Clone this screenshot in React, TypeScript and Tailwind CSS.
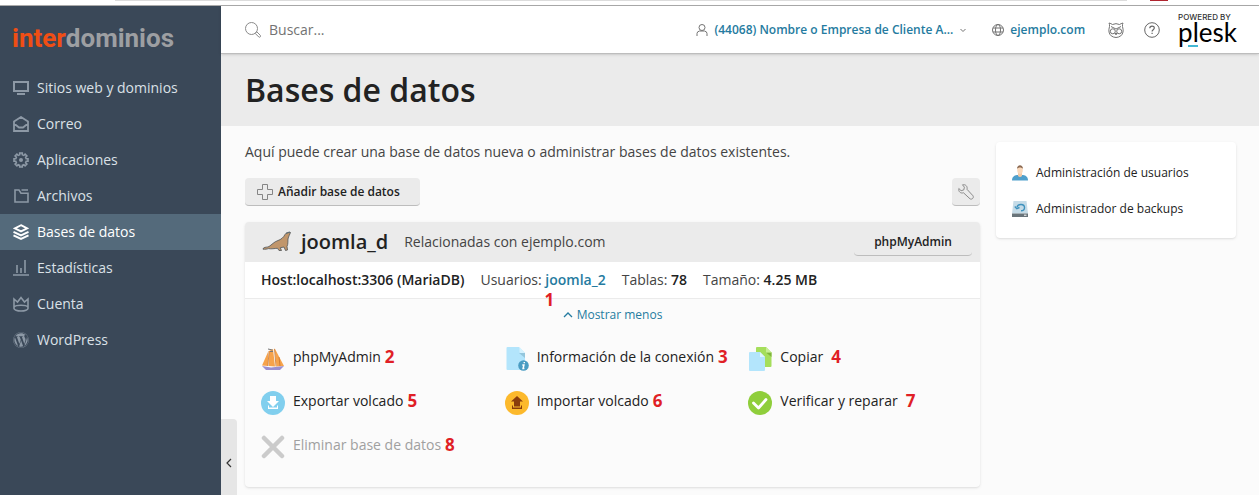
import React from 'react';
import { FaWordpress } from 'react-icons/fa';

const navItems = [
  { label: 'Sitios web y dominios', icon: <SitesIcon /> },
  { label: 'Correo', icon: <MailIcon /> },
  { label: 'Aplicaciones', icon: <GearIcon /> },
  { label: 'Archivos', icon: <FolderIcon /> },
  { label: 'Bases de datos', icon: <LayersIcon />, active: true },
  { label: 'Estadísticas', icon: <StatsIcon /> },
  { label: 'Cuenta', icon: <CrownIcon /> },
  { label: 'WordPress', icon: <FaWordpress className="w-4 h-4" /> },
];

const actions = [
  { label: 'phpMyAdmin', icon: <SailboatIcon />, step: 2, gap: 'gap-1' },
  { label: 'Información de la conexión', icon: <InfoFileIcon />, step: 3, gap: 'gap-1' },
  { label: 'Copiar', icon: <CopyIcon />, step: 4, gap: 'gap-2' },
  { label: 'Exportar volcado', icon: <ExportIcon />, step: 5, gap: 'gap-1' },
  { label: 'Importar volcado', icon: <ImportIcon />, step: 6, gap: 'gap-1' },
  { label: 'Verificar y reparar', icon: <CheckIcon />, step: 7, gap: 'gap-2' },
  { label: 'Eliminar base de datos', icon: <RemoveIcon />, step: 8, gap: 'gap-1', disabled: true },
];

function SitesIcon() {
  return (
    <svg className="w-4 h-4" viewBox="0 0 16 16" fill="none" stroke="currentColor" strokeWidth="2">
      <path d="M1 2h14v9H1zM4 14h8" />
    </svg>
  );
}

function MailIcon() {
  return (
    <svg className="w-4 h-4" viewBox="0 0 16 16" fill="none" stroke="currentColor" strokeWidth="1.8">
      <path d="M1 5.500l7-4.500 7 4.500V15H1zM1 7.500l5 4h4l5-4" />
    </svg>
  );
}

function GearIcon() {
  return (
    <svg className="w-4 h-4" viewBox="0 0 16 16" fill="none" stroke="currentColor" strokeWidth="1.6">
      <path d="M6.700 1h2.600v1.800l1.500.6 1.300-1.200 1.800 1.800-1.300 1.300.6 1.400H15v2.600h-1.800l-.6 1.500 1.300 1.300-1.800 1.800-1.300-1.300-1.500.6V15H6.700v-1.800l-1.500-.6-1.300 1.300-1.800-1.800 1.300-1.300-.6-1.500H1V6.700h1.800l.6-1.400-1.300-1.300 1.800-1.800 1.300 1.200 1.500-.6z" />
      <circle cx="8" cy="8" r="2" fill="currentColor" stroke="none" />
    </svg>
  );
}

function FolderIcon() {
  return (
    <svg className="w-4 h-4" viewBox="0 0 16 16" fill="none" stroke="currentColor" strokeWidth="1.6">
      <path d="M2 2h4l2 3.200h7V14H2zM8.500 2H15" />
    </svg>
  );
}

function LayersIcon() {
  return (
    <svg className="w-4 h-4" viewBox="0 0 16 16" fill="none" stroke="currentColor" strokeWidth="1.900">
      <path d="M8 1.200L14.200 4.300 8 7.400 1.800 4.300zM.5 7.800L8 11.400l7.500-3.600M.5 11.300L8 14.900l7.500-3.600" />
    </svg>
  );
}

function StatsIcon() {
  return (
    <svg className="w-4 h-4" viewBox="0 0 16 16" fill="none" stroke="currentColor" strokeWidth="1.600">
      <path d="M0 15h16M4 13V5M8 13V8M12 13V0" />
    </svg>
  );
}

function CrownIcon() {
  return (
    <svg className="w-4 h-4" viewBox="0 0 16 16" fill="none" stroke="currentColor" strokeWidth="1.600">
      <path d="M1 3l3.500 3L8 1.500 11.500 6 15 3v9.500c0 1.200-3 2.500-7 2.500s-7-1.300-7-2.500zM1 11c2-2.300 12-2.300 14 0" />
    </svg>
  );
}

function SailboatIcon() {
  return (
    <svg className="w-6 h-6 shrink-0" viewBox="0 0 24 24">
      <path d="M7 5L1 18.500l6 .5zM8 4v15l6 .5L12 2zM13.500 1l2 18.500 7.500-.5z" fill="#f6a34c" />
      <path d="M8 4L7 19M13.500 2l1.500 17.500M18 10l1 9" stroke="#c9752d" strokeWidth=".8" />
      <path d="M7 2l4.500 1M9 4.500h3" stroke="#777" strokeWidth="1" />
      <path d="M1 19l9 1.500 13-1.500-4 4H5z" fill="#9a8fd0" />
    </svg>
  );
}

function InfoFileIcon() {
  return (
    <svg className="w-6 h-6 shrink-0" viewBox="0 0 24 24">
      <path d="M2.500 0H14l6 6v17H2.500q-1 0-1-1V1q0-1 1-1z" fill="#b3e5fc" />
      <path d="M14 6h6v5z" fill="#94c6dc" />
      <path d="M14.500 0v5q0 1 1 1H20z" fill="#d5f2fe" />
      <circle cx="18.500" cy="18.500" r="5.300" fill="#4a9cc2" />
      <path d="M19.300 15v1.300M17.300 18h1.600l-.8 3.500h1.300" stroke="#fff" strokeWidth="1.500" fill="none" />
    </svg>
  );
}

function CopyIcon() {
  return (
    <svg className="w-6 h-6 shrink-0" viewBox="0 0 24 24">
      <path d="M9 0h9l5.500 5.500V19q0 1-1 1H8V1q0-1 1-1z" fill="#a5de5b" />
      <path d="M18 5.500h5.500V10z" fill="#7fb43c" />
      <path d="M18 0v5.500h5.500z" fill="#c8ee95" />
      <path d="M2 5h10l5 5v13q0 1-1 1H2q-1 0-1-1V6q0-1 1-1z" fill="#b3e5fc" />
      <path d="M12 5v5h5z" fill="#def5fe" />
    </svg>
  );
}

function ExportIcon() {
  return (
    <svg className="w-6 h-6 shrink-0" viewBox="0 0 24 24">
      <circle cx="12" cy="12" r="12" fill="#81cfee" />
      <path d="M9 5h6v5h3l-6 6-6-6h3zM7 14.500V18h10v-3.500h-1v2H8v-2z" fill="#fff" />
    </svg>
  );
}

function ImportIcon() {
  return (
    <svg className="w-6 h-6 shrink-0" viewBox="0 0 24 24">
      <circle cx="12" cy="12" r="12" fill="#fcb92c" />
      <path d="M9 15.500h6v-5h3L12 5l-6 5.500h3zM7 14.500V18h10v-3.500h-1v2H8v-2z" fill="#8a3c0c" />
    </svg>
  );
}

function CheckIcon() {
  return (
    <svg className="w-6 h-6 shrink-0" viewBox="0 0 24 24" fill="none">
      <circle cx="12" cy="12" r="12" fill="#8fce3b" />
      <path d="M5.500 12l5 5 7.500-8.500" stroke="#fff" strokeWidth="2.800" strokeLinecap="round" strokeLinejoin="round" />
    </svg>
  );
}

function RemoveIcon() {
  return (
    <svg className="w-6 h-6 shrink-0" viewBox="0 0 24 24">
      <path d="M3 3l18 18M21 3L3 21" stroke="#cbcbcb" strokeWidth="4.500" strokeLinecap="round" />
    </svg>
  );
}

function SeaLionIcon() {
  return (
    <svg className="w-8 h-6 shrink-0" viewBox="0 0 32 24">
      <path
        d="M29.500 2.500c-2-.6-4.500.2-5.500 2-1.500 3-4 5-7 6-4 1.300-6.500 4.500-9 6-1.500.9-3.500.3-5.500 1.500l-.5 1.200c2.500.2 3.500 0 5.500-.6 3 .6 6-.2 9-.3l1.500 2.200h2.500l-1.200-2.800 3.700-.7 1.500 3.500 2-.5-.5-3.500c1.500-3 .5-6 1.200-8.500.5-1.800 1.500-3.300 2.300-5.500z"
        fill="#c1966b"
        stroke="#4f5457"
        strokeWidth=".8"
      />
      <path d="M25 3.500l4-1.500" stroke="#5d6f78" strokeWidth="1.300" />
    </svg>
  );
}

function UserColorIcon() {
  return (
    <svg className="w-4 h-4 shrink-0" viewBox="0 0 16 16">
      <path d="M0 15.500c0-3.500 2-5 5-5.500h6c3 .5 5 2 5 5.500z" fill="#4f9fcb" />
      <path d="M6 8h4v3q-2 2-4 0z" fill="#f1c8a6" />
      <ellipse cx="8" cy="5" rx="2.800" ry="4" fill="#fbd9bb" />
      <path d="M5 4c0-5 6-5 6 0-1-2-5-2-6 0z" fill="#8b6a52" />
    </svg>
  );
}

function BackupIcon() {
  return (
    <svg className="w-4 h-4 shrink-0" viewBox="0 0 16 16">
      <path d="M1.500 0h13L16 12.500H0z" fill="#c5dbe7" />
      <path d="M0 12.500h16V16H0z" fill="#69747a" />
      <path d="M12 14.200h2.500" stroke="#fff" strokeWidth="1" />
      <path d="M5 6C6 2.500 12.500 2.500 12.500 6.500c0 2.300-1.500 3.300-3.500 3.300M2.800 5.500l2 2.200L7.500 6.500" stroke="#3f92bd" strokeWidth="1.400" fill="none" />
    </svg>
  );
}

function Sidebar() {
  return (
    <aside className="w-[221px] shrink-0 bg-[#3a4858]">
      <a href="#" className="flex items-center h-16 pl-3 text-[26px] leading-8 font-bold font-['Roboto',sans-serif]">
        <span className="text-[#f04e14]">inter</span>
        <span className="text-[#9d9fa2]">dominios</span>
      </a>
      <nav>
        {navItems.map((item) => (
          <a
            key={item.label}
            href="#"
            className={
              item.active
                ? 'flex items-center gap-2 h-9 pl-[13px] bg-[#546a7b] text-white'
                : 'flex items-center gap-2 h-9 pl-[13px] text-[#8d99a6]'
            }
          >
            {item.icon}
            <span className={item.active ? 'text-white' : 'text-[#dbe1e7]'}>{item.label}</span>
          </a>
        ))}
      </nav>
    </aside>
  );
}

function TopBar() {
  return (
    <header className="flex items-center justify-between h-12 pl-6 pr-[22px] bg-white border-b border-[#bdbdbd] shadow-sm z-10">
      <label className="flex items-center gap-2">
        <svg className="w-4 h-4" viewBox="0 0 16 16" fill="none" stroke="#8a8a8a" strokeWidth="1">
          <circle cx="6.500" cy="6.500" r="6" />
          <path d="M10.800 10.800l1-1 3.500 3.500q.6.8 0 1.500-.8.800-1.500.2l-3.500-3.500z" />
        </svg>
        <input type="text" placeholder="Buscar..." aria-label="Buscar" className="w-60 outline-none placeholder:text-[#737373]" />
      </label>

      <div className="flex items-center text-[12px] font-semibold text-[#257ba0]">
        <button type="button" className="flex items-center gap-1.5">
          <svg className="w-3 h-3" viewBox="0 0 12 12" fill="none" stroke="#737373" strokeWidth="1">
            <circle cx="6" cy="3.500" r="3" />
            <path d="M1 12V9.500Q1 7.500 3.500 7h5q2.500.5 2.500 2.500V12" />
          </svg>
          <span>(44068) Nombre o Empresa de Cliente A...</span>
          <svg className="w-2 h-2" viewBox="0 0 8 8" fill="none" stroke="#737373">
            <path d="M1.500 3L4 5.500 6.500 3" />
          </svg>
        </button>
        <a href="#" className="flex items-center gap-1.5 ml-[25px]">
          <svg className="w-3 h-3" viewBox="0 0 12 12" fill="none" stroke="#737373" strokeWidth="1">
            <circle cx="6" cy="6" r="5.500" />
            <ellipse cx="6" cy="6" rx="2.500" ry="5.500" />
            <path d="M1 4h10M1 8h10" />
          </svg>
          ejemplo.com
        </a>
        <button type="button" aria-label="Asistente" className="ml-[23px]">
          <svg className="w-4 h-4" viewBox="0 0 16 16" fill="none" stroke="#737373" strokeWidth="1">
            <path d="M1 1q2 .5 3.500 1.500Q8 .8 11.500 2.500 13 1.500 15 1q-.8 1.500-.5 3.500Q15.500 8 15 10q-1 5-7 5.500Q2 15 1 10 .5 8 1.500 4.500 1.800 2.500 1 1z" />
            <path d="M3 4.500l5 2.500 5-2.500" />
            <circle cx="4.800" cy="9.300" r="2.500" />
            <circle cx="11.200" cy="9.300" r="2.500" />
            <path d="M7 11.500h2l-1 1.300z" fill="#737373" />
          </svg>
        </button>
        <button type="button" aria-label="Ayuda" className="ml-5">
          <svg className="w-4 h-4" viewBox="0 0 16 16" fill="none" stroke="#666" strokeWidth="1">
            <circle cx="8" cy="8" r="7.300" />
            <path d="M5.800 6.300c0-3 4.500-2.800 4.500-.3 0 1.700-2.200 1.700-2.200 3.500M8.100 10.800v1.200" strokeWidth="1.200" />
          </svg>
        </button>
        <a href="#" className="flex flex-col ml-[18px] text-black">
          <span className="text-[8px] leading-2 font-medium font-['Inter',sans-serif] text-[#333]">POWERED BY</span>
          <span className="text-[26px] leading-[22px] font-normal font-['Lato',sans-serif]">plesk</span>
          <span className="w-2.5 h-0.5 mt-0.5 ml-2.5 bg-[#43b8d4]" />
        </a>
      </div>
    </header>
  );
}

function DatabaseCard() {
  return (
    <section className="mt-4 h-[265px] rounded overflow-hidden bg-[#fbfbfb] shadow">
      <div className="flex items-center h-10 pl-4 pr-2 bg-[#ebebeb]">
        <SeaLionIcon />
        <h2 className="ml-2 text-[20px] leading-7 font-semibold text-[#222]">joomla_d</h2>
        <span className="ml-4">Relacionadas con ejemplo.com</span>
        <button type="button" className="ml-auto h-7 px-5 text-[12px] font-semibold text-[#222] rounded-sm border-b border-[#bdbdbd]">
          phpMyAdmin
        </button>
      </div>

      <div className="flex items-center gap-4 h-[37px] px-4 bg-white border-b border-[#ebebeb]">
        <b className="font-semibold text-[#222]">Host:localhost:3306 (MariaDB)</b>
        <span className="relative">
          Usuarios: <a href="#" className="font-semibold text-[#257ba0]">joomla_2</a>
          <span className="absolute left-16 top-[18px] text-[17px] leading-6 font-bold text-[#e01f26]">1</span>
        </span>
        <span>
          Tablas: <b className="font-semibold text-[#222]">78</b>
        </span>
        <span>
          Tamaño: <b className="font-semibold text-[#222]">4.25 MB</b>
        </span>
      </div>

      <button type="button" className="flex items-center gap-1 mx-auto h-8 text-[12px] text-[#257ba0]">
        <svg className="w-2.5 h-2.5" viewBox="0 0 10 10" fill="none" stroke="currentColor" strokeWidth="1.300">
          <path d="M1 7l4-4 4 4" />
        </svg>
        Mostrar menos
      </button>

      <div className="grid grid-cols-3 gap-x-7 gap-y-5 px-4 pt-4">
        {actions.map((action) => (
          <div key={action.label} className={`flex h-6 ${action.gap}`}>
            <button type="button" disabled={action.disabled} className="flex gap-2 text-[#222] disabled:text-[#a0a0a0]">
              {action.icon}
              <span className="leading-5 whitespace-nowrap">{action.label}</span>
            </button>
            <span className="text-[17px] leading-5 font-bold text-[#e01f26]">{action.step}</span>
          </div>
        ))}
      </div>
    </section>
  );
}

export default function App() {
  return (
    <div className="flex flex-col h-screen overflow-hidden bg-[#fbfbfb] font-['Open_Sans',sans-serif] text-[14px] leading-5 text-[#444]">
      <div className="flex h-1.5 shrink-0 items-start bg-white border-b border-[#aaa]">
        <div className="ml-[115px] mr-[23px] h-px flex-1 bg-[#dcdcdc]" />
        <div className="mr-[91px] w-[18px] h-px bg-[#b0242f]" />
      </div>

      <div className="flex flex-1 min-h-0">
        <Sidebar />
        <div className="relative flex flex-col flex-1 min-w-0">
          <TopBar />
          <div className="flex items-center h-[72px] shrink-0 pl-6 bg-[#ebebeb]">
            <h1 className="text-[32px] leading-10 font-semibold text-[#222]">Bases de datos</h1>
          </div>

          <div className="flex items-start gap-4 pl-6 pr-[23px] pt-4">
            <main className="flex-1 min-w-0">
              <p>Aquí puede crear una base de datos nueva o administrar bases de datos existentes.</p>
              <div className="flex justify-between mt-4">
                <button type="button" className="flex items-center gap-[5px] h-7 pl-3 pr-5 rounded-sm bg-[#ebebeb] border-b border-[#bdbdbd] text-[12px] font-semibold text-[#222]">
                  <svg className="w-4 h-4" viewBox="0 0 16 16" fill="none" stroke="#858585">
                    <path d="M5.500.5h5v5h5v5h-5v5h-5v-5h-5v-5h5z" />
                  </svg>
                  Añadir base de datos
                </button>
                <button type="button" aria-label="Configuración" className="flex items-center justify-center w-7 h-7 rounded-sm bg-[#ebebeb] border-b border-[#bdbdbd]">
                  <svg className="w-4 h-4" viewBox="0 0 16 16" fill="none" stroke="#8a8a8a">
                    <path d="M4.500.8c3-.8 5.300 1.700 4.500 4.500l6 6.500c1.200 2-1.200 4.200-3 3L5.500 8.800C2.500 9.700.2 7.500.8 4.500l2.300 2.200 2.700-.8.600-2.700z" />
                  </svg>
                </button>
              </div>
              <DatabaseCard />
            </main>

            <aside className="w-60 shrink-0 flex flex-col h-24 px-4 pt-[13px] rounded bg-white text-[12px] text-[#222] shadow">
              <a href="#" className="flex items-center gap-2 h-9">
                <UserColorIcon />
                Administración de usuarios
              </a>
              <a href="#" className="flex items-center gap-2 h-9">
                <BackupIcon />
                Administrador de backups
              </a>
            </aside>
          </div>

          <button type="button" aria-label="Contraer menú" className="absolute left-0 bottom-0 flex justify-center w-4 h-[76px] pt-[39px] rounded-tr bg-[#e6e6e6]">
            <svg className="w-2 h-2.5" viewBox="0 0 8 10" fill="none" stroke="#333" strokeWidth="1.200">
              <path d="M6 1L2 5l4 4" />
            </svg>
          </button>
        </div>
      </div>
    </div>
  );
}
